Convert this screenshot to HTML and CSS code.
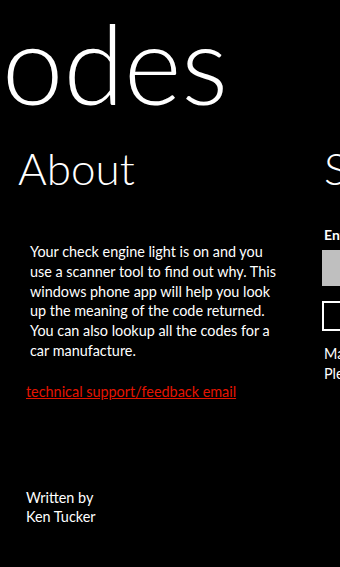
FILE: index.html
```html
<!DOCTYPE html>
<html lang="en">
<head>
  <meta charset="UTF-8" />
  <meta name="viewport" content="width=device-width, initial-scale=1" />
  <title>Codes</title>
  <link rel="stylesheet" href="styles.css">
</head>
<body>
  <div class="panorama">
    <h1 class="pano-title">odes</h1>

    <div class="pano-items">
      <section class="pano-item about">
        <h2>About</h2>
        <p class="about-text">Your check engine light is on and you use a scanner tool to find out why. This windows phone app will help you look up the meaning of the code returned. You can also lookup all the codes for a car manufacture.</p>
        <a class="support" href="#">technical support/feedback email</a>
        <p class="author">Written by<br>Ken Tucker</p>
      </section>

      <section class="pano-item search">
        <h2>Search</h2>
        <label class="field-label">Enter code</label>
        <div class="text-box"></div>
        <div class="button-box"></div>
        <p class="hint">Make sure<br>Please</p>
      </section>
    </div>
  </div>
</body>
</html>
```

FILE: styles.css
```css
body {
  margin: 0;
  background: #000;
  color: #fff;
  font-family: Lato, "Open Sans", sans-serif;
  overflow: hidden;
  width: 340px;
  height: 567px;
}

.panorama {
  width: 340px;
  height: 567px;
  overflow: hidden;
}

.pano-title {
  margin: 0;
  padding-left: 2px;
  font-size: 110px;
  font-weight: 300;
  line-height: 124px;
  white-space: nowrap;
}

.pano-items {
  display: flex;
  gap: 8px;
  margin-top: 14px;
  padding-left: 18px;
}

.pano-item {
  flex: 0 0 298px;
}

.pano-item h2 {
  margin: 0;
  font-size: 44px;
  font-weight: 300;
  line-height: 60px;
  white-space: nowrap;
}

/* About */
.about-text {
  margin: 44px 0 0 12px;
  font-size: 14.4px;
  line-height: 19.8px;
  width: 252px;
}
.support {
  display: block;
  margin: 22px 0 0 8px;
  color: #e51400;
  font-size: 14.4px;
}
.author {
  margin: 88px 0 0 8px;
  font-size: 14.4px;
  line-height: 19px;
}

/* Search */
.field-label {
  display: block;
  margin-top: 28px;
  font-size: 14px;
  font-weight: bold;
}
.text-box {
  margin-top: 7px;
  margin-left: -2px;
  height: 36px;
  background: #bfbfbf;
}
.button-box {
  margin-top: 15px;
  margin-left: -2px;
  height: 26px;
  border: 2px solid #fff;
}
.hint {
  margin: 13px 0 0 0;
  font-size: 14.4px;
  line-height: 20px;
  white-space: nowrap;
}
```
